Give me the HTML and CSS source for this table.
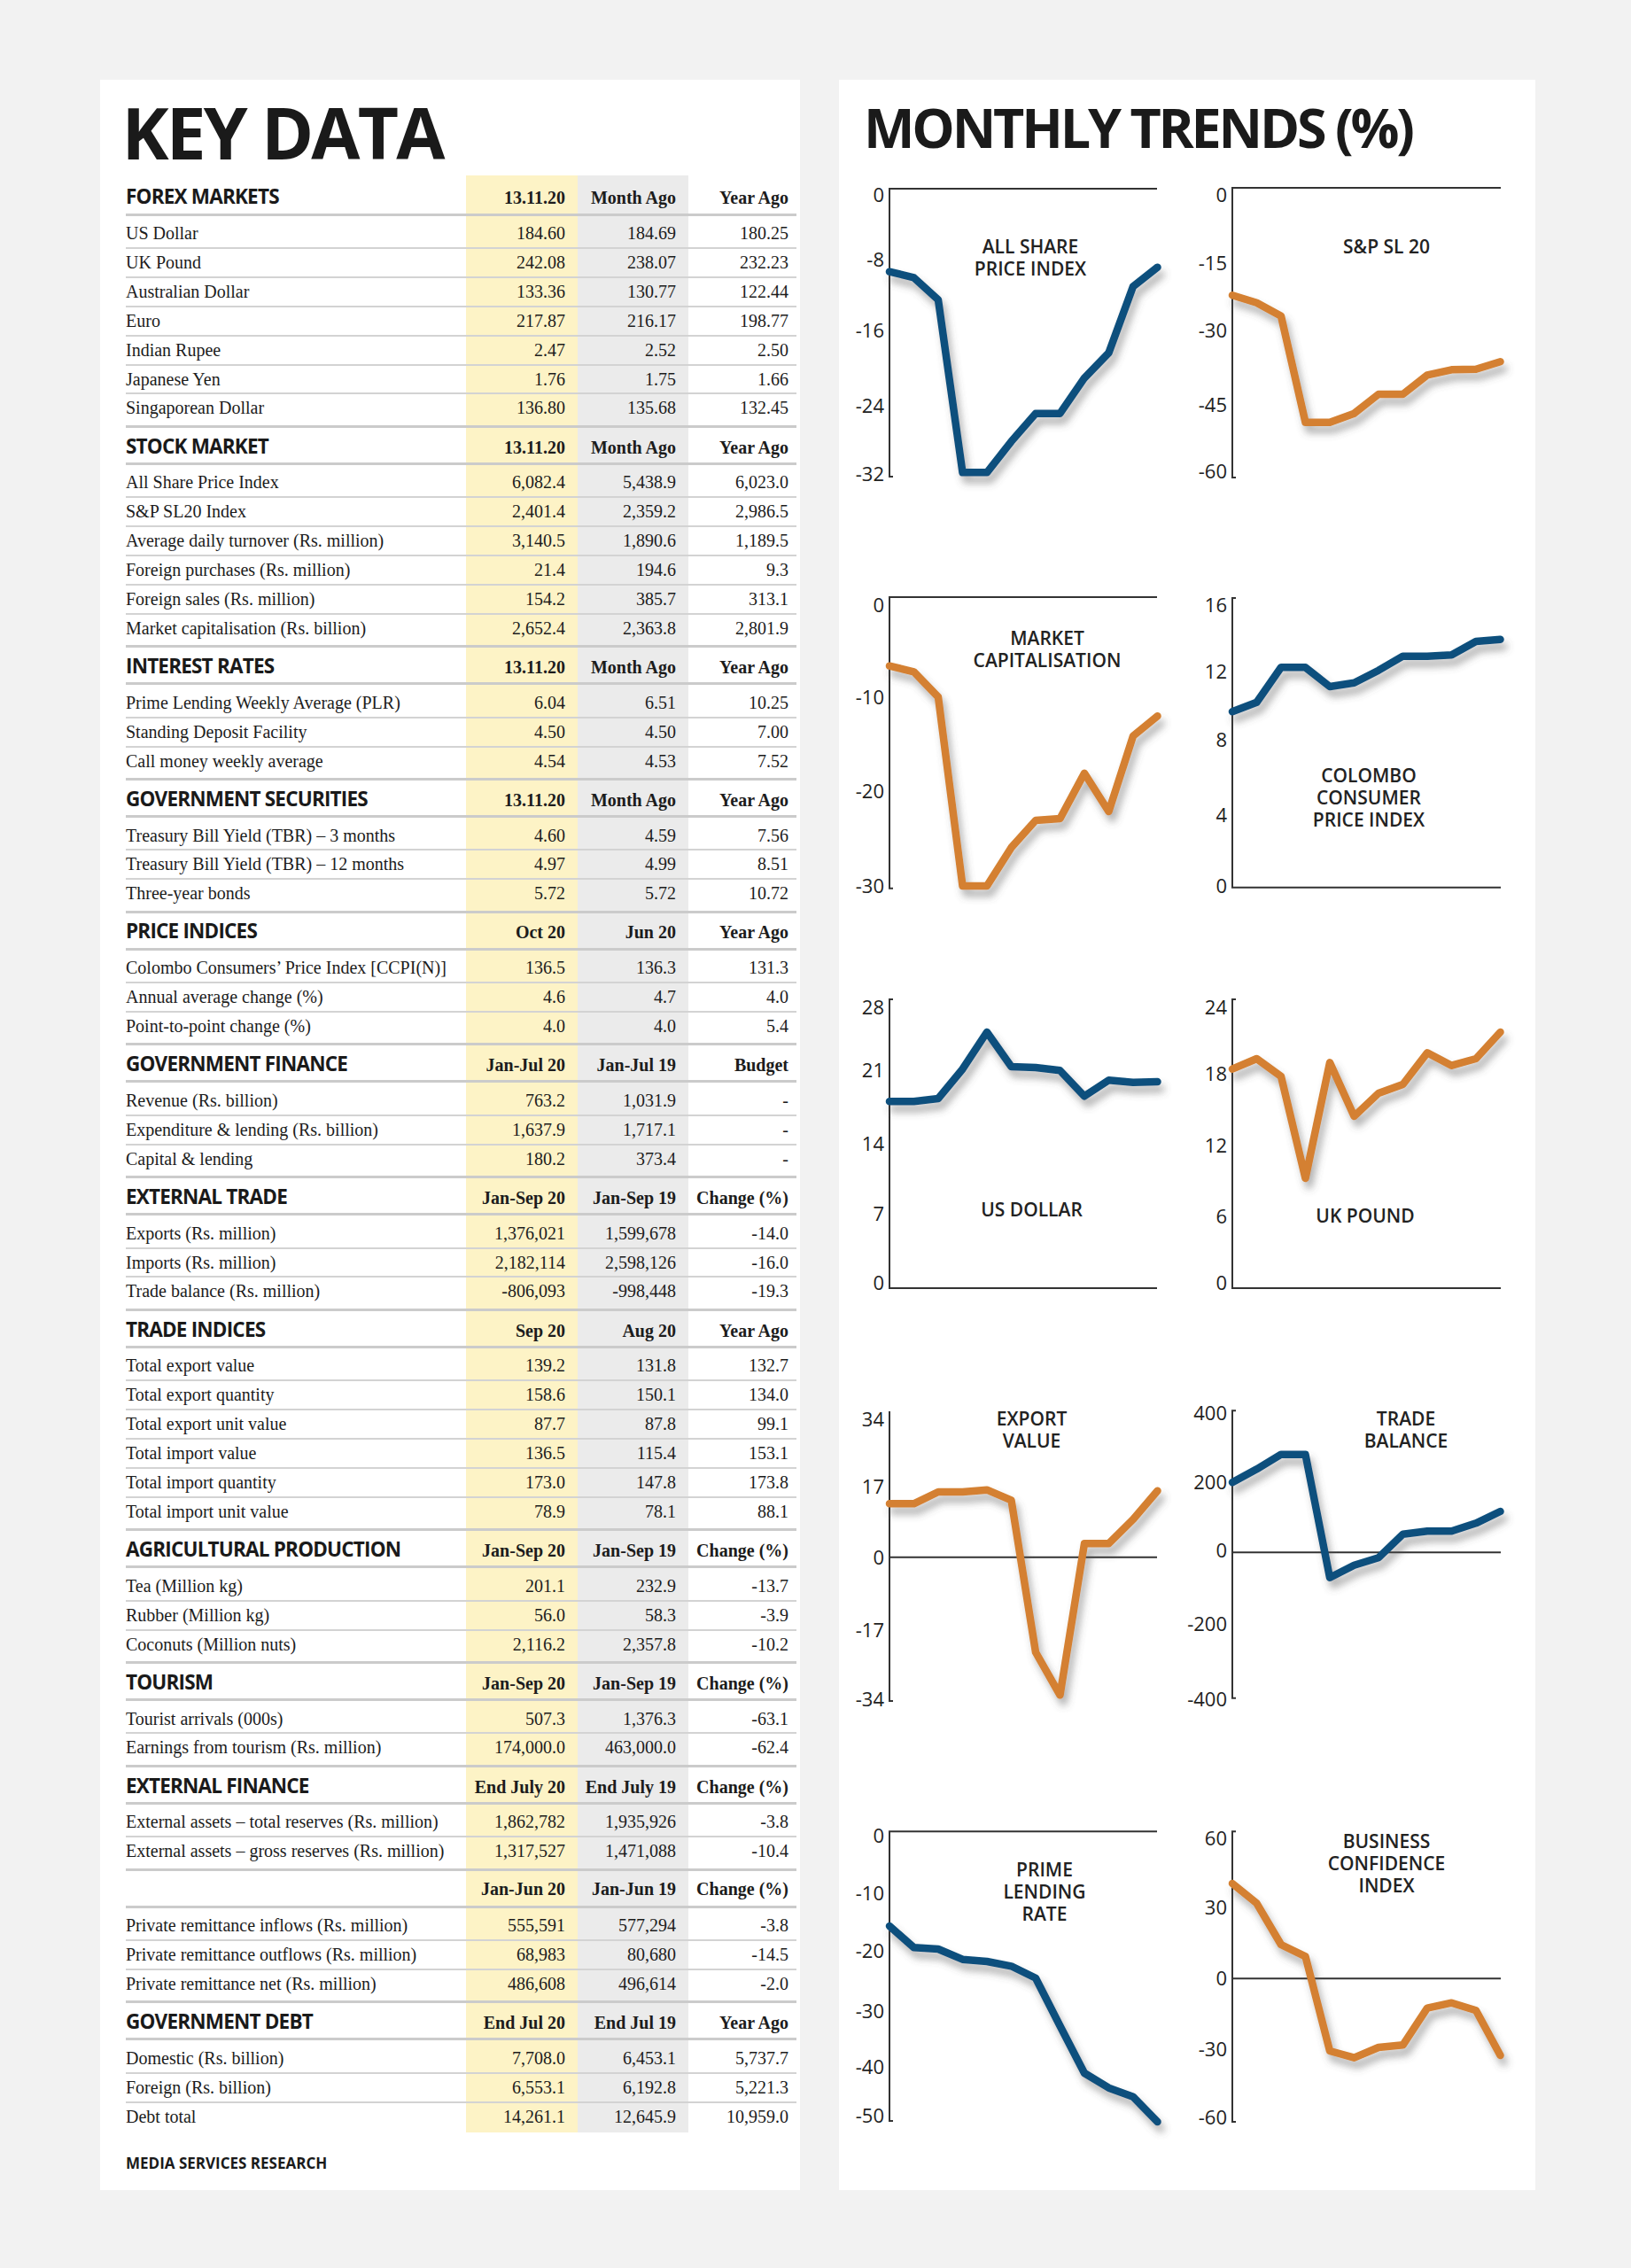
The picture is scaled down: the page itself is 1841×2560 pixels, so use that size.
FILE: index.html
```html
<!DOCTYPE html>
<html lang="en">
<head>
<meta charset="utf-8">
<title>Key Data / Monthly Trends</title>
<link rel="stylesheet" href="styles.css">
</head>
<body>
<div class="page">
  <section class="panel key">
    <h1 class="key-title">KEY DATA</h1>
    <div class="table">
      <div class="sec">
        <div class="hrow"><span class="sname">FOREX MARKETS</span><span class="c1">13.11.20</span><span class="c2">Month Ago</span><span class="c3">Year Ago</span></div>
        <div class="body">
          <div class="row"><span>US Dollar</span><span class="c1">184.60</span><span class="c2">184.69</span><span class="c3">180.25</span></div>
          <div class="row"><span>UK Pound</span><span class="c1">242.08</span><span class="c2">238.07</span><span class="c3">232.23</span></div>
          <div class="row"><span>Australian Dollar</span><span class="c1">133.36</span><span class="c2">130.77</span><span class="c3">122.44</span></div>
          <div class="row"><span>Euro</span><span class="c1">217.87</span><span class="c2">216.17</span><span class="c3">198.77</span></div>
          <div class="row"><span>Indian Rupee</span><span class="c1">2.47</span><span class="c2">2.52</span><span class="c3">2.50</span></div>
          <div class="row"><span>Japanese Yen</span><span class="c1">1.76</span><span class="c2">1.75</span><span class="c3">1.66</span></div>
          <div class="row"><span>Singaporean Dollar</span><span class="c1">136.80</span><span class="c2">135.68</span><span class="c3">132.45</span></div>
        </div>
      </div>
      <div class="sec">
        <div class="hrow"><span class="sname">STOCK MARKET</span><span class="c1">13.11.20</span><span class="c2">Month Ago</span><span class="c3">Year Ago</span></div>
        <div class="body">
          <div class="row"><span>All Share Price Index</span><span class="c1">6,082.4</span><span class="c2">5,438.9</span><span class="c3">6,023.0</span></div>
          <div class="row"><span>S&amp;P SL20 Index</span><span class="c1">2,401.4</span><span class="c2">2,359.2</span><span class="c3">2,986.5</span></div>
          <div class="row"><span>Average daily turnover (Rs. million)</span><span class="c1">3,140.5</span><span class="c2">1,890.6</span><span class="c3">1,189.5</span></div>
          <div class="row"><span>Foreign purchases (Rs. million)</span><span class="c1">21.4</span><span class="c2">194.6</span><span class="c3">9.3</span></div>
          <div class="row"><span>Foreign sales (Rs. million)</span><span class="c1">154.2</span><span class="c2">385.7</span><span class="c3">313.1</span></div>
          <div class="row"><span>Market capitalisation (Rs. billion)</span><span class="c1">2,652.4</span><span class="c2">2,363.8</span><span class="c3">2,801.9</span></div>
        </div>
      </div>
      <div class="sec">
        <div class="hrow"><span class="sname">INTEREST RATES</span><span class="c1">13.11.20</span><span class="c2">Month Ago</span><span class="c3">Year Ago</span></div>
        <div class="body">
          <div class="row"><span>Prime Lending Weekly Average (PLR)</span><span class="c1">6.04</span><span class="c2">6.51</span><span class="c3">10.25</span></div>
          <div class="row"><span>Standing Deposit Facility</span><span class="c1">4.50</span><span class="c2">4.50</span><span class="c3">7.00</span></div>
          <div class="row"><span>Call money weekly average</span><span class="c1">4.54</span><span class="c2">4.53</span><span class="c3">7.52</span></div>
        </div>
      </div>
      <div class="sec">
        <div class="hrow"><span class="sname">GOVERNMENT SECURITIES</span><span class="c1">13.11.20</span><span class="c2">Month Ago</span><span class="c3">Year Ago</span></div>
        <div class="body">
          <div class="row"><span>Treasury Bill Yield (TBR) – 3 months</span><span class="c1">4.60</span><span class="c2">4.59</span><span class="c3">7.56</span></div>
          <div class="row"><span>Treasury Bill Yield (TBR) – 12 months</span><span class="c1">4.97</span><span class="c2">4.99</span><span class="c3">8.51</span></div>
          <div class="row"><span>Three-year bonds</span><span class="c1">5.72</span><span class="c2">5.72</span><span class="c3">10.72</span></div>
        </div>
      </div>
      <div class="sec">
        <div class="hrow"><span class="sname">PRICE INDICES</span><span class="c1">Oct 20</span><span class="c2">Jun 20</span><span class="c3">Year Ago</span></div>
        <div class="body">
          <div class="row"><span>Colombo Consumers’ Price Index [CCPI(N)]</span><span class="c1">136.5</span><span class="c2">136.3</span><span class="c3">131.3</span></div>
          <div class="row"><span>Annual average change (%)</span><span class="c1">4.6</span><span class="c2">4.7</span><span class="c3">4.0</span></div>
          <div class="row"><span>Point-to-point change (%)</span><span class="c1">4.0</span><span class="c2">4.0</span><span class="c3">5.4</span></div>
        </div>
      </div>
      <div class="sec">
        <div class="hrow"><span class="sname">GOVERNMENT FINANCE</span><span class="c1">Jan-Jul 20</span><span class="c2">Jan-Jul 19</span><span class="c3">Budget</span></div>
        <div class="body">
          <div class="row"><span>Revenue (Rs. billion)</span><span class="c1">763.2</span><span class="c2">1,031.9</span><span class="c3">-</span></div>
          <div class="row"><span>Expenditure &amp; lending (Rs. billion)</span><span class="c1">1,637.9</span><span class="c2">1,717.1</span><span class="c3">-</span></div>
          <div class="row"><span>Capital &amp; lending</span><span class="c1">180.2</span><span class="c2">373.4</span><span class="c3">-</span></div>
        </div>
      </div>
      <div class="sec">
        <div class="hrow"><span class="sname">EXTERNAL TRADE</span><span class="c1">Jan-Sep 20</span><span class="c2">Jan-Sep 19</span><span class="c3">Change (%)</span></div>
        <div class="body">
          <div class="row"><span>Exports (Rs. million)</span><span class="c1">1,376,021</span><span class="c2">1,599,678</span><span class="c3">-14.0</span></div>
          <div class="row"><span>Imports (Rs. million)</span><span class="c1">2,182,114</span><span class="c2">2,598,126</span><span class="c3">-16.0</span></div>
          <div class="row"><span>Trade balance (Rs. million)</span><span class="c1">-806,093</span><span class="c2">-998,448</span><span class="c3">-19.3</span></div>
        </div>
      </div>
      <div class="sec">
        <div class="hrow"><span class="sname">TRADE INDICES</span><span class="c1">Sep 20</span><span class="c2">Aug 20</span><span class="c3">Year Ago</span></div>
        <div class="body">
          <div class="row"><span>Total export value</span><span class="c1">139.2</span><span class="c2">131.8</span><span class="c3">132.7</span></div>
          <div class="row"><span>Total export quantity</span><span class="c1">158.6</span><span class="c2">150.1</span><span class="c3">134.0</span></div>
          <div class="row"><span>Total export unit value</span><span class="c1">87.7</span><span class="c2">87.8</span><span class="c3">99.1</span></div>
          <div class="row"><span>Total import value</span><span class="c1">136.5</span><span class="c2">115.4</span><span class="c3">153.1</span></div>
          <div class="row"><span>Total import quantity</span><span class="c1">173.0</span><span class="c2">147.8</span><span class="c3">173.8</span></div>
          <div class="row"><span>Total import unit value</span><span class="c1">78.9</span><span class="c2">78.1</span><span class="c3">88.1</span></div>
        </div>
      </div>
      <div class="sec">
        <div class="hrow"><span class="sname">AGRICULTURAL PRODUCTION</span><span class="c1">Jan-Sep 20</span><span class="c2">Jan-Sep 19</span><span class="c3">Change (%)</span></div>
        <div class="body">
          <div class="row"><span>Tea (Million kg)</span><span class="c1">201.1</span><span class="c2">232.9</span><span class="c3">-13.7</span></div>
          <div class="row"><span>Rubber (Million kg)</span><span class="c1">56.0</span><span class="c2">58.3</span><span class="c3">-3.9</span></div>
          <div class="row"><span>Coconuts (Million nuts)</span><span class="c1">2,116.2</span><span class="c2">2,357.8</span><span class="c3">-10.2</span></div>
        </div>
      </div>
      <div class="sec">
        <div class="hrow"><span class="sname">TOURISM</span><span class="c1">Jan-Sep 20</span><span class="c2">Jan-Sep 19</span><span class="c3">Change (%)</span></div>
        <div class="body">
          <div class="row"><span>Tourist arrivals (000s)</span><span class="c1">507.3</span><span class="c2">1,376.3</span><span class="c3">-63.1</span></div>
          <div class="row"><span>Earnings from tourism (Rs. million)</span><span class="c1">174,000.0</span><span class="c2">463,000.0</span><span class="c3">-62.4</span></div>
        </div>
      </div>
      <div class="sec">
        <div class="hrow"><span class="sname">EXTERNAL FINANCE</span><span class="c1">End July 20</span><span class="c2">End July 19</span><span class="c3">Change (%)</span></div>
        <div class="body">
          <div class="row"><span>External assets – total reserves (Rs. million)</span><span class="c1">1,862,782</span><span class="c2">1,935,926</span><span class="c3">-3.8</span></div>
          <div class="row"><span>External assets – gross reserves (Rs. million)</span><span class="c1">1,317,527</span><span class="c2">1,471,088</span><span class="c3">-10.4</span></div>
        </div>
      </div>
      <div class="sec">
        <div class="hrow"><span class="sname"></span><span class="c1">Jan-Jun 20</span><span class="c2">Jan-Jun 19</span><span class="c3">Change (%)</span></div>
        <div class="body">
          <div class="row"><span>Private remittance inflows (Rs. million)</span><span class="c1">555,591</span><span class="c2">577,294</span><span class="c3">-3.8</span></div>
          <div class="row"><span>Private remittance outflows (Rs. million)</span><span class="c1">68,983</span><span class="c2">80,680</span><span class="c3">-14.5</span></div>
          <div class="row"><span>Private remittance net (Rs. million)</span><span class="c1">486,608</span><span class="c2">496,614</span><span class="c3">-2.0</span></div>
        </div>
      </div>
      <div class="sec">
        <div class="hrow"><span class="sname">GOVERNMENT DEBT</span><span class="c1">End Jul 20</span><span class="c2">End Jul 19</span><span class="c3">Year Ago</span></div>
        <div class="body">
          <div class="row"><span>Domestic (Rs. billion)</span><span class="c1">7,708.0</span><span class="c2">6,453.1</span><span class="c3">5,737.7</span></div>
          <div class="row"><span>Foreign (Rs. billion)</span><span class="c1">6,553.1</span><span class="c2">6,192.8</span><span class="c3">5,221.3</span></div>
          <div class="row"><span>Debt total</span><span class="c1">14,261.1</span><span class="c2">12,645.9</span><span class="c3">10,959.0</span></div>
        </div>
      </div>
    </div>
    <p class="source">MEDIA SERVICES RESEARCH</p>
  </section>

  <section class="panel trends">
    <h1 class="trends-title">MONTHLY TRENDS (%)</h1>
    <div class="charts">
      <svg class="chart" width="387" height="462" viewBox="0 0 387 462">
        <defs>
          <filter id="sh" filterUnits="userSpaceOnUse" x="-20" y="-20" width="440" height="540">
            <feDropShadow dx="4" dy="8" stdDeviation="4" flood-color="#555" flood-opacity="0.45"/>
          </filter>
        </defs>
        <path class="ax" d="M349 23H47V348h4"/>
        <text class="lb" x="41" y="38">0</text>
        <text class="lb" x="41" y="111">-8</text>
        <text class="lb" x="41" y="191">-16</text>
        <text class="lb" x="41" y="276">-24</text>
        <text class="lb" x="41" y="353">-32</text>
        <text class="ttl" x="206" y="95.5">ALL SHARE</text>
        <text class="ttl" x="206" y="120.5">PRICE INDEX</text>
        <polyline class="ln blue" points="47,116.7 74.5,123.3 102,148.3 129.5,343.3 157,343.3 184.5,308.3 212,276.7 239.5,276.7 267,236.7 294.5,208.3 322,133.3 349.5,111.7"/>
      </svg>
      <svg class="chart" width="380" height="462" viewBox="0 0 380 462">
        <path class="ax" d="M350 22H47V349h4"/>
        <text class="lb" x="41" y="38">0</text>
        <text class="lb" x="41" y="114.5">-15</text>
        <text class="lb" x="41" y="191">-30</text>
        <text class="lb" x="41" y="274.5">-45</text>
        <text class="lb" x="41" y="349.5">-60</text>
        <text class="ttl" x="221" y="95.5">S&amp;P SL 20</text>
        <polyline class="ln orange" points="47,143.3 74.5,151.7 102,166.7 129.5,286.7 157,286.7 184.5,276.7 212,255 239.5,255 267,233.3 294.5,227.3 322,226.7 349.5,218.3"/>
      </svg>

      <svg class="chart" width="387" height="454" viewBox="0 0 387 454">
        <path class="ax" d="M349 22H47V350.7h4"/>
        <text class="lb" x="41" y="39">0</text>
        <text class="lb" x="41" y="143">-10</text>
        <text class="lb" x="41" y="249">-20</text>
        <text class="lb" x="41" y="356">-30</text>
        <text class="ttl" x="225" y="75.5">MARKET</text>
        <text class="ttl" x="225" y="100.5">CAPITALISATION</text>
        <polyline class="ln orange" points="47,99.7 74.5,106.3 102,134.7 129.5,348 157,348 184.5,304.7 212,274 239.5,272 267,220.7 294.5,264 322,178.7 349.5,156.3"/>
      </svg>
      <svg class="chart" width="380" height="454" viewBox="0 0 380 454">
        <path class="ax" d="M51 23H47V349.7H350"/>
        <text class="lb" x="41" y="39">16</text>
        <text class="lb" x="41" y="114">12</text>
        <text class="lb" x="41" y="191">8</text>
        <text class="lb" x="41" y="276">4</text>
        <text class="lb" x="41" y="356">0</text>
        <text class="ttl" x="201" y="230.5">COLOMBO</text>
        <text class="ttl" x="201" y="255.5">CONSUMER</text>
        <text class="ttl" x="201" y="280.5">PRICE INDEX</text>
        <polyline class="ln blue" points="47,151.3 74.5,140.7 102,101.3 129.5,101.3 157,123 184.5,118.7 212,104.7 239.5,88.7 267,88.7 294.5,87.3 322,72 349.5,69.7"/>
      </svg>

      <svg class="chart" width="387" height="465" viewBox="0 0 387 465">
        <path class="ax" d="M51 22H47V348H349"/>
        <text class="lb" x="41" y="38.5">28</text>
        <text class="lb" x="41" y="110">21</text>
        <text class="lb" x="41" y="192.5">14</text>
        <text class="lb" x="41" y="272">7</text>
        <text class="lb" x="41" y="350">0</text>
        <text class="ttl" x="207.5" y="266.5">US DOLLAR</text>
        <polyline class="ln blue" points="47,137.3 74.5,137.3 102,134 129.5,100.7 157,59 184.5,98 212,99 239.5,102.3 267,131.3 294.5,113.3 322,115.7 349.5,115"/>
      </svg>
      <svg class="chart" width="380" height="465" viewBox="0 0 380 465">
        <path class="ax" d="M51 22H47V348H350"/>
        <text class="lb" x="41" y="39">24</text>
        <text class="lb" x="41" y="113.5">18</text>
        <text class="lb" x="41" y="195">12</text>
        <text class="lb" x="41" y="275">6</text>
        <text class="lb" x="41" y="350">0</text>
        <text class="ttl" x="197" y="274">UK POUND</text>
        <polyline class="ln orange" points="47,100.7 74.5,89 102,109 129.5,224 157,93.3 184.5,154 212,128 239.5,118 267,82.3 294.5,96.7 322,89 349.5,59"/>
      </svg>

      <svg class="chart" width="387" height="474" viewBox="0 0 387 474">
        <path class="ax" d="M47 22V349h4"/>
        <path class="ax" d="M47 186.7H349"/>
        <text class="lb" x="41" y="38.5">34</text>
        <text class="lb" x="41" y="115">17</text>
        <text class="lb" x="41" y="195">0</text>
        <text class="lb" x="41" y="277">-17</text>
        <text class="lb" x="41" y="355">-34</text>
        <text class="ttl" x="207.5" y="38.2">EXPORT</text>
        <text class="ttl" x="207.5" y="62.5">VALUE</text>
        <polyline class="ln orange" points="47,126.3 74.5,126.3 102,113 129.5,113 157,110.7 184.5,122.3 212,294 239.5,342.3 267,171.3 294.5,171.3 322,144 349.5,111.7"/>
      </svg>
      <svg class="chart" width="380" height="474" viewBox="0 0 380 474">
        <path class="ax" d="M51 21.3H47V345.7h4"/>
        <path class="ax" d="M47 181.3H350"/>
        <text class="lb" x="41" y="31.8">400</text>
        <text class="lb" x="41" y="109.8">200</text>
        <text class="lb" x="41" y="186.8">0</text>
        <text class="lb" x="41" y="269.8">-200</text>
        <text class="lb" x="41" y="354.8">-400</text>
        <text class="ttl" x="243" y="38.2">TRADE</text>
        <text class="ttl" x="243" y="62.5">BALANCE</text>
        <polyline class="ln blue" points="47,102.3 74.5,87.3 102,70.7 129.5,70.7 157,209.7 184.5,195.7 212,187.3 239.5,160.7 267,157.3 294.5,157.3 322,148.3 349.5,135"/>
      </svg>

      <svg class="chart" width="387" height="380" viewBox="0 0 387 380">
        <path class="ax" d="M349 22.3H47V349h4"/>
        <text class="lb" x="41" y="34.5">0</text>
        <text class="lb" x="41" y="99.5">-10</text>
        <text class="lb" x="41" y="164.5">-20</text>
        <text class="lb" x="41" y="232.8">-30</text>
        <text class="lb" x="41" y="295.8">-40</text>
        <text class="lb" x="41" y="351">-50</text>
        <text class="ttl" x="222" y="72.5">PRIME</text>
        <text class="ttl" x="222" y="97.5">LENDING</text>
        <text class="ttl" x="222" y="122.5">RATE</text>
        <polyline class="ln blue" points="47,129 74.5,153.3 102,155 129.5,166.7 157,169 184.5,174.3 212,187.7 239.5,241.7 267,295 294.5,311.7 322,321.7 349.5,350"/>
      </svg>
      <svg class="chart" width="380" height="380" viewBox="0 0 380 380">
        <path class="ax" d="M51 22.3H47V350h4"/>
        <path class="ax" d="M47 188.3H350"/>
        <text class="lb" x="41" y="37.8">60</text>
        <text class="lb" x="41" y="116">30</text>
        <text class="lb" x="41" y="195.8">0</text>
        <text class="lb" x="41" y="275.8">-30</text>
        <text class="lb" x="41" y="352.8">-60</text>
        <text class="ttl" x="221" y="40.8">BUSINESS</text>
        <text class="ttl" x="221" y="65.8">CONFIDENCE</text>
        <text class="ttl" x="221" y="90.8">INDEX</text>
        <polyline class="ln orange" points="47,81 74.5,103.3 102,150 129.5,163.3 157,270 184.5,277.7 212,266 239.5,263.3 267,221.7 294.5,215.7 322,224.3 349.5,275"/>
      </svg>
    </div>
  </section>
</div>
</body>
</html>
```

FILE: styles.css
```css
* { box-sizing: border-box; }

body {
  margin: 0;
  background: #f2f2f2;
  color: #1c1c1c;
}

.page {
  display: flex;
  align-items: stretch;
  gap: 44px;
  padding: 90px 0 0 113px;
}

.panel {
  background: #ffffff;
}

/* ---------- KEY DATA ---------- */
.key {
  width: 790px;
  padding: 19px 4px 22px 29px;
}

.key-title {
  height: 80px;
  margin: 0 0 9px -4.5px;
  font: 700 80px/1 "Open Sans", sans-serif;
  letter-spacing: -2.8px;
  color: #1a1a1a;
}

.table {
  width: 757px;
  padding-top: 3.5px;
  background: linear-gradient(to right,
    transparent 384px,
    #fdf3c6 384px, #fdf3c6 510px,
    #ebebeb 510px, #ebebeb 635px,
    transparent 635px);
  font-family: "Liberation Serif", "Times New Roman", serif;
  font-size: 20px;
  color: #1c1c1c;
}

.hrow,
.row {
  display: grid;
  grid-template-columns: 384px 126px 125px 122px;
  align-items: baseline;
  align-content: start;
  white-space: nowrap;
}

.hrow {
  height: 42px;
  padding-top: 8.75px;
  line-height: 24px;
  font-weight: 700;
  border-bottom: 3px solid #cbcbcb;
}

.sname {
  font-family: "Open Sans", sans-serif;
  font-size: 22.5px;
  font-weight: 700;
  letter-spacing: -0.8px;
  color: #1a1a1a;
}

.c1,
.c2 {
  text-align: right;
  padding-right: 14px;
}

.c3 {
  text-align: right;
  padding-right: 9px;
}

.body {
  padding-top: 4.5px;
}

.row {
  height: 32.92px;
  padding-top: 4px;
  line-height: 23px;
  border-bottom: 2px solid #d3d3d3;
}

.sec:not(:last-child) .row:last-child {
  height: 37.42px;
  border-bottom: 3px solid #cbcbcb;
}

.sec:last-child .row:last-child {
  border-bottom: 0;
}

.source {
  height: 17px;
  margin: 26px 0 0;
  font: 700 17px/1 "Open Sans", sans-serif;
  letter-spacing: 0;
  color: #1a1a1a;
}

/* ---------- MONTHLY TRENDS ---------- */
.trends {
  width: 786px;
  padding: 23px 0 0 10px;
}

.trends-title {
  height: 61px;
  margin: 0 0 16px 18px;
  font: 700 61px/1 "Open Sans", sans-serif;
  letter-spacing: -3.2px;
  color: #1a1a1a;
}

.charts {
  display: grid;
  grid-template-columns: 387px 380px;
}

.chart {
  display: block;
  overflow: visible;
}

.chart text {
  font-family: "Open Sans", sans-serif;
  fill: #222222;
}

.lb {
  font-size: 22px;
  text-anchor: end;
}

.ttl {
  font-size: 21px;
  font-weight: 600;
  text-anchor: middle;
}

.ax {
  fill: none;
  stroke: #333333;
  stroke-width: 2;
}

.ln {
  fill: none;
  stroke-width: 8.5;
  stroke-linejoin: round;
  stroke-linecap: round;
  filter: url(#sh);
}

.blue { stroke: #0e507d; }
.orange { stroke: #d48030; }
```
